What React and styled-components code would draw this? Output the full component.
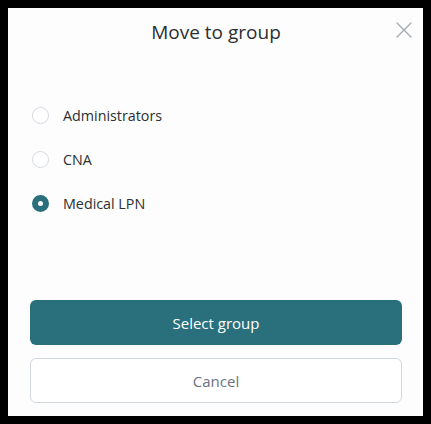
import React, { useState } from "react";
import styled, { createGlobalStyle } from "styled-components";

const GlobalStyle = createGlobalStyle`
  html, body {
    margin: 0;
    background: #000;
  }
  body {
    padding: 8px;
    font-family: "Open Sans", "Noto Sans", sans-serif;
  }
`;

const groups = ["Administrators", "CNA", "Medical LPN"];

const App = () => {
  const [selected, setSelected] = useState("Medical LPN");

  return (
    <>
      <GlobalStyle />
      <StModal>
        <StHeader>
          <div className='title'>Move to group</div>
          <StClose aria-label='close'>
            <svg width='16' height='16' viewBox='0 0 16 16'>
              <path
                d='M1 1L15 15M15 1L1 15'
                stroke='#a3abb5'
                strokeWidth='1.4'
                strokeLinecap='round'
              />
            </svg>
          </StClose>
        </StHeader>
        <StList>
          {groups.map((g) => (
            <StOption key={g} onClick={() => setSelected(g)}>
              <StRadio checked={selected === g} />
              <span>{g}</span>
            </StOption>
          ))}
        </StList>
        <StActions>
          <StBtn primary>Select group</StBtn>
          <StBtn>Cancel</StBtn>
        </StActions>
      </StModal>
    </>
  );
};

const StModal = styled.div`
  width: 415px;
  height: 408px;
  box-sizing: border-box;
  background-color: #fdfdfd;
  display: flex;
  flex-direction: column;
  padding: 0 21px 13px 22px;
`;

const StHeader = styled.div`
  position: relative;
  height: 48px;
  display: flex;
  align-items: center;
  justify-content: center;

  .title {
    font-size: 19px;
    color: #2b2f33;
  }
`;

const StClose = styled.button`
  position: absolute;
  right: -10px;
  top: 14px;
  border: none;
  background: none;
  padding: 0;
  width: 16px;
  height: 16px;
  display: flex;
`;

const StList = styled.div`
  display: flex;
  flex-direction: column;
  gap: 24px;
  margin-top: 49px;
  flex: 1;
`;

const StOption = styled.label`
  display: flex;
  align-items: center;
  gap: 14px;
  height: 20px;
  font-size: 14.3px;
  color: #2b2f33;
  cursor: pointer;
  padding-left: 2px;
`;

const StRadio = styled.span`
  width: 17px;
  height: 17px;
  box-sizing: border-box;
  border-radius: 50%;
  border: ${(p) => (p.checked ? "6px solid #2a6f7c" : "1.5px solid #d4d9df")};
  background-color: #fff;
  flex-shrink: 0;
`;

const StActions = styled.div`
  display: flex;
  flex-direction: column;
  gap: 13px;
`;

const StBtn = styled.button`
  height: 45px;
  width: 100%;
  border-radius: 6px;
  font-size: 15px;
  font-family: "Open Sans", "Noto Sans", sans-serif;
  cursor: pointer;
  background-color: ${(p) => (p.primary ? "#2a707c" : "#fff")};
  color: ${(p) => (p.primary ? "#fff" : "#6b7280")};
  border: ${(p) => (p.primary ? "none" : "1px solid #d3d8de")};
`;

export default App;
